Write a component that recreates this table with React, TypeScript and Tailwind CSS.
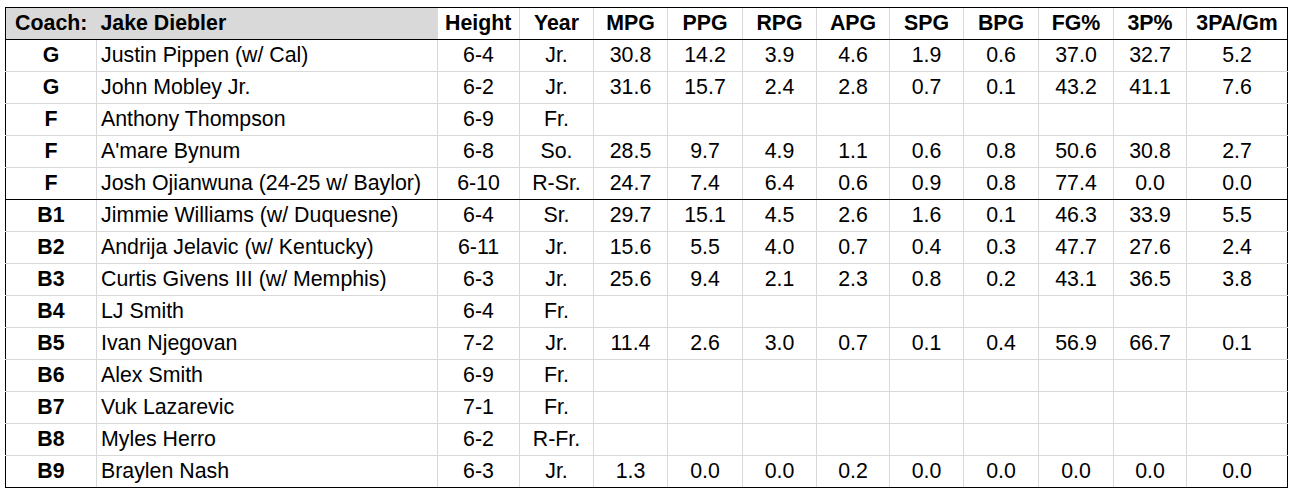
import React from "react";

type Row = { pos: string; name: string; ht: string; yr: string; stats: string[]; sep?: boolean };

const rows: Row[] = [
  { pos: "G", name: "Justin Pippen (w/ Cal)", ht: "6-4", yr: "Jr.", stats: ["30.8", "14.2", "3.9", "4.6", "1.9", "0.6", "37.0", "32.7", "5.2"] },
  { pos: "G", name: "John Mobley Jr.", ht: "6-2", yr: "Jr.", stats: ["31.6", "15.7", "2.4", "2.8", "0.7", "0.1", "43.2", "41.1", "7.6"] },
  { pos: "F", name: "Anthony Thompson", ht: "6-9", yr: "Fr.", stats: [] },
  { pos: "F", name: "A'mare Bynum", ht: "6-8", yr: "So.", stats: ["28.5", "9.7", "4.9", "1.1", "0.6", "0.8", "50.6", "30.8", "2.7"] },
  { pos: "F", name: "Josh Ojianwuna (24-25 w/ Baylor)", ht: "6-10", yr: "R-Sr.", stats: ["24.7", "7.4", "6.4", "0.6", "0.9", "0.8", "77.4", "0.0", "0.0"], sep: true },
  { pos: "B1", name: "Jimmie Williams (w/ Duquesne)", ht: "6-4", yr: "Sr.", stats: ["29.7", "15.1", "4.5", "2.6", "1.6", "0.1", "46.3", "33.9", "5.5"] },
  { pos: "B2", name: "Andrija Jelavic (w/ Kentucky)", ht: "6-11", yr: "Jr.", stats: ["15.6", "5.5", "4.0", "0.7", "0.4", "0.3", "47.7", "27.6", "2.4"] },
  { pos: "B3", name: "Curtis Givens III (w/ Memphis)", ht: "6-3", yr: "Jr.", stats: ["25.6", "9.4", "2.1", "2.3", "0.8", "0.2", "43.1", "36.5", "3.8"] },
  { pos: "B4", name: "LJ Smith", ht: "6-4", yr: "Fr.", stats: [] },
  { pos: "B5", name: "Ivan Njegovan", ht: "7-2", yr: "Jr.", stats: ["11.4", "2.6", "3.0", "0.7", "0.1", "0.4", "56.9", "66.7", "0.1"] },
  { pos: "B6", name: "Alex Smith", ht: "6-9", yr: "Fr.", stats: [] },
  { pos: "B7", name: "Vuk Lazarevic", ht: "7-1", yr: "Fr.", stats: [] },
  { pos: "B8", name: "Myles Herro", ht: "6-2", yr: "R-Fr.", stats: [] },
  { pos: "B9", name: "Braylen Nash", ht: "6-3", yr: "Jr.", stats: ["1.3", "0.0", "0.0", "0.2", "0.0", "0.0", "0.0", "0.0", "0.0"] },
];

const widths = [91, 341, 82, 74, 74, 75, 74, 73, 74, 75, 75, 73, 101];
const heads = ["Height", "Year", "MPG", "PPG", "RPG", "APG", "SPG", "BPG", "FG%", "3P%", "3PA/Gm"];

export default function App() {
  const last = rows.length - 1;
  return (
    <div className="bg-white w-[1293px] h-[493px] pt-[7px] pl-[5px]" style={{ fontFamily: '"Liberation Sans", Arial, sans-serif' }}>
      <table className="border-collapse table-fixed w-[1283px] border border-black text-black text-[21.33px] leading-none">
        <colgroup>
          {widths.map((w, i) => (
            <col key={i} style={{ width: w }} />
          ))}
        </colgroup>
        <thead>
          <tr className="h-[32px]">
            <th className="bg-[#d9d9d9] font-bold text-center p-0 border-t border-l border-b border-black">Coach:</th>
            <th className="bg-[#d9d9d9] font-bold text-left pl-[4px] p-0 border-t border-b border-black">Jake Diebler</th>
            {heads.map((h, i) => (
              <th
                key={h}
                className={`font-bold text-center p-0 border-t border-b border-black ${i === 0 ? "" : "border-l border-l-[#d9d9d9]"} ${i === heads.length - 1 ? "border-r border-r-black" : ""}`}
              >
                {h}
              </th>
            ))}
          </tr>
        </thead>
        <tbody>
          {rows.map((r, ri) => {
            const bottom = r.sep || ri === last ? "border-b border-b-black" : "border-b border-b-[#d9d9d9]";
            const cells = [r.ht, r.yr, ...Array.from({ length: 9 }, (_, i) => r.stats[i] ?? "")];
            return (
              <tr key={ri} className="h-[32px]">
                <td className={`font-bold text-center p-0 border-l border-l-black border-r border-r-[#d9d9d9] ${bottom}`}>{r.pos}</td>
                <td className={`text-left pl-[4px] p-0 border-r border-r-[#d9d9d9] whitespace-nowrap ${bottom}`}>{r.name}</td>
                {cells.map((v, ci) => (
                  <td
                    key={ci}
                    className={`text-center p-0 border-r ${ci === cells.length - 1 ? "border-r-black" : "border-r-[#d9d9d9]"} ${bottom}`}
                  >
                    {v}
                  </td>
                ))}
              </tr>
            );
          })}
        </tbody>
      </table>
    </div>
  );
}
